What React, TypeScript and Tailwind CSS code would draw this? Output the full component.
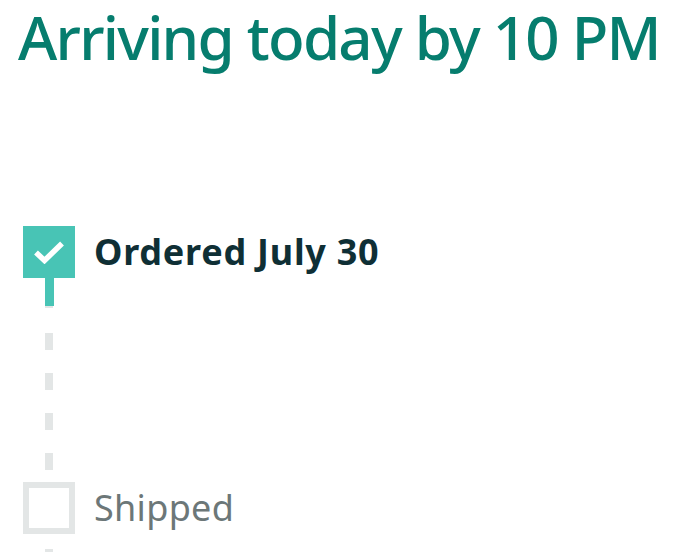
const FONT = "font-['Noto_Sans','Open_Sans',sans-serif]";

function Dash() {
  return <div className="w-[8px] h-[17px] bg-[#e3e6e6]" />;
}

export default function App() {
  return (
    <div className={`w-[680px] h-[552px] overflow-hidden bg-white ${FONT}`}>
      <h1 className="pl-[18px] pt-[1px] text-[60px] leading-[72px] font-medium text-[#067d6e] tracking-[-1.75px] whitespace-nowrap">
        Arriving today by 10 PM
      </h1>

      <div className="mt-[153px] pl-[23px]">
        {/* step: ordered */}
        <div className="flex items-center">
          <div className="w-[52px] h-[52px] bg-[#48c4b5] flex items-center justify-center">
            <svg width="32" height="24" viewBox="0 0 32 24" fill="none">
              <path d="M3 12.5 L11.5 20.5 L29 3.5" stroke="white" strokeWidth="5.5" />
            </svg>
          </div>
          <span className="ml-[19px] text-[36px] font-bold text-[#0f2f35] leading-[44px] tracking-[0.75px]">
            Ordered July 30
          </span>
        </div>

        {/* connector */}
        <div className="w-[52px] h-[204px] flex flex-col items-center">
          <div className="w-[9px] h-[28px] bg-[#48c4b5] ml-[1px]" />
          <div className="w-[8px] h-[2px] bg-[#e3e6e6]" />
          <div className="pt-[25px] flex flex-col gap-[23px]">
            <Dash />
            <Dash />
            <Dash />
            <Dash />
          </div>
        </div>

        {/* step: shipped */}
        <div className="flex items-center">
          <div className="w-[52px] h-[52px] border-[6px] border-[#e3e6e6] bg-white" />
          <span className="ml-[19px] text-[36px] text-[#6c7778] leading-[44px] tracking-[0.3px]">Shipped</span>
        </div>

        <div className="w-[52px] flex flex-col items-center pt-[15px]">
          <Dash />
        </div>
      </div>
    </div>
  );
}
